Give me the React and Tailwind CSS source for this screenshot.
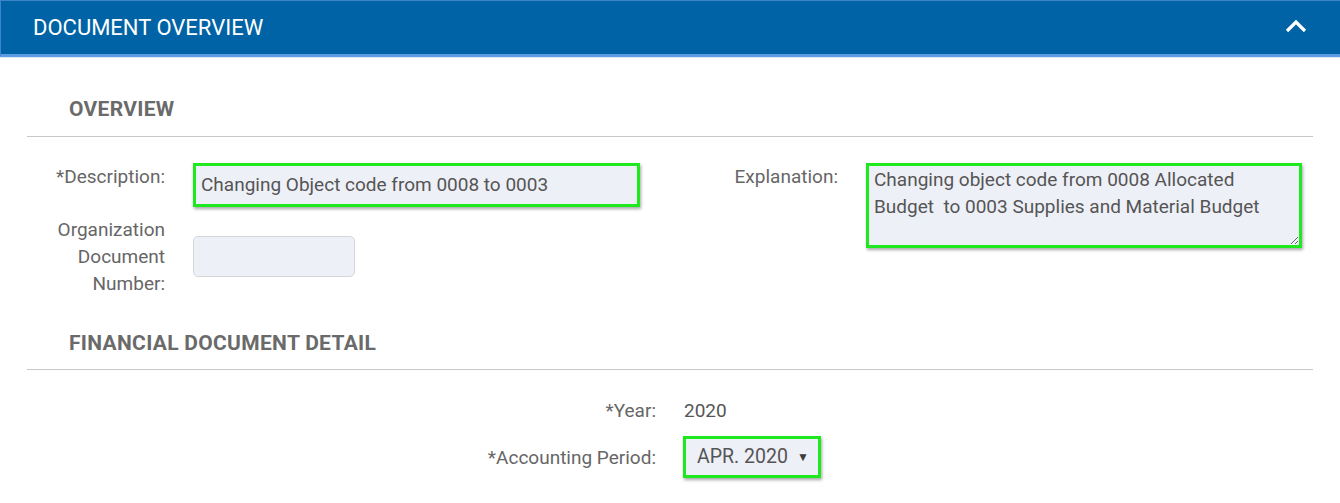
import React from "react";

export default function App() {
  return (
    <div className="w-[1340px] h-[503px] bg-white overflow-hidden" style={{ fontFamily: "Roboto, 'Liberation Sans', sans-serif" }}>
      {/* Header */}
      <div className="h-[57px] bg-[#0063a5] border-t border-l border-[#3d86c9] border-b-[3px] border-b-[#5d9de4] flex items-center justify-between pl-[32px] pr-[33px] shadow-[0_1px_0_#dde9f7]">
        <div className="text-white text-[22px] leading-none mt-[1px]">DOCUMENT OVERVIEW</div>
        <svg width="22" height="14" viewBox="0 0 22 14" className="mb-[3px]">
          <path d="M2 12 L11 3 L20 12" fill="none" stroke="white" strokeWidth="3.2" />
        </svg>
      </div>

      <div className="pl-[27px] pr-[27px]">
        {/* OVERVIEW heading */}
        <div className="pt-[39px] pl-[42px] h-[80px] border-b border-[#c8c8c8]">
          <div className="text-[21px] font-bold tracking-[0.3px] text-[#6a6a6a] leading-[26px]">OVERVIEW</div>
        </div>

        {/* Overview fields */}
        <div className="flex pt-[26px] text-[19px] text-[#666]">
          <div className="w-[643px] flex flex-col">
            <div className="flex items-start">
              <div className="w-[138px] text-right leading-[27px]">*Description:</div>
              <div className="ml-[28px] w-[447px] h-[44px] border-[3px] border-[#1ee81e] bg-[#eef0f8] shadow-[1px_2px_3px_rgba(0,0,0,0.35)] flex items-center px-[5px] text-[#555] text-[19px]">
                Changing Object code from 0008 to 0003
              </div>
            </div>
            <div className="flex items-center mt-[9px]">
              <div className="w-[138px] text-right leading-[27px]">
                Organization<br />Document<br />Number:
              </div>
              <div className="ml-[28px] w-[162px] h-[41px] rounded-[5px] border border-[#d4d6dc] bg-[#eef0f8]" />
            </div>
          </div>
          <div className="flex items-start">
            <div className="w-[168px] text-right leading-[27px]">Explanation:</div>
            <textarea
              readOnly
              className="ml-[28px] w-[436px] h-[85px] border-[3px] border-[#1ee81e] bg-[#eef0f8] shadow-[1px_2px_3px_rgba(0,0,0,0.35)] px-[5px] pt-0 text-[#555] text-[19px] leading-[27px] outline-none"
              defaultValue={"Changing object code from 0008 Allocated Budget  to 0003 Supplies and Material Budget"}
            />
          </div>
        </div>

        {/* FINANCIAL DOCUMENT DETAIL heading */}
        <div className="mt-[33px] pl-[42px] h-[40px] border-b border-[#c8c8c8]">
          <div className="text-[21px] font-bold tracking-[0.3px] text-[#6a6a6a] leading-[26px]">FINANCIAL DOCUMENT DETAIL</div>
        </div>

        {/* Detail fields */}
        <div className="pt-[27px] text-[19px] text-[#666]">
          <div className="flex items-center">
            <div className="w-[629px] text-right leading-[27px]">*Year:</div>
            <div className="ml-[28px] text-[#555] leading-[27px]">2020</div>
          </div>
          <div className="flex items-center mt-[12px]">
            <div className="w-[629px] text-right leading-[27px]">*Accounting Period:</div>
            <div className="ml-[27px] w-[138px] h-[42px] border-[3px] border-[#1ee81e] bg-[#eef0f8] shadow-[1px_2px_3px_rgba(0,0,0,0.35)] flex items-center justify-between pl-[11px] pr-[9px] text-[#555]">
              <span className="text-[19.5px]">APR. 2020</span>
              <span className="text-[12px] text-[#3a3a3a]">▼</span>
            </div>
          </div>
        </div>
      </div>
    </div>
  );
}
